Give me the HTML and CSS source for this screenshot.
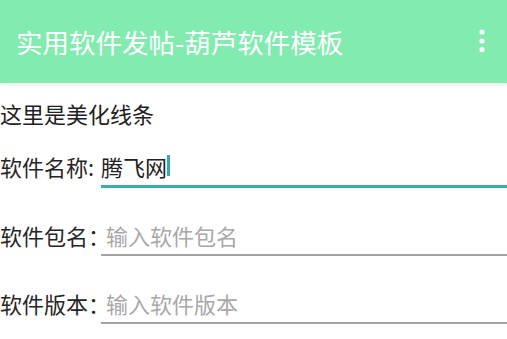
FILE: index.html
```html
<!DOCTYPE html>
<html lang="zh-CN">
<head>
<meta charset="utf-8">
<title>实用软件发帖-葫芦软件模板</title>
<link rel="stylesheet" href="styles.css">
</head>
<body>
<header class="appbar">
  <h1 class="title">实用软件发帖-葫芦软件模板</h1>
  <svg class="more" width="6" height="24" viewBox="0 0 6 24" aria-hidden="true">
    <circle cx="3" cy="3" r="2.6" fill="#fff"/>
    <circle cx="3" cy="12" r="2.6" fill="#fff"/>
    <circle cx="3" cy="20.7" r="2.6" fill="#fff"/>
  </svg>
</header>
<main class="content">
  <p class="note">这里是美化线条</p>
  <div class="row row-first">
    <span class="label">软件名称:</span>
    <div class="field focused"><span class="value">腾飞网</span><span class="caret"></span></div>
  </div>
  <div class="row">
    <span class="label">软件包名：</span>
    <div class="field"><span class="hint">输入软件包名</span></div>
  </div>
  <div class="row">
    <span class="label">软件版本：</span>
    <div class="field"><span class="hint">输入软件版本</span></div>
  </div>
</main>
</body>
</html>
```
FILE: styles.css
```css
html, body {
  margin: 0;
  padding: 0;
  background: #ffffff;
  font-family: "Noto Sans CJK SC", "Noto Sans", sans-serif;
  color: #212121;
}

.appbar {
  height: 83px;
  background: #82ebb0;
  display: flex;
  align-items: center;
  justify-content: space-between;
  padding: 0 22px 0 16px;
  box-shadow: 0 1px 3px rgba(0, 0, 0, 0.12);
  position: relative;
}

.title {
  margin: 0;
  font-size: 26.5px;
  font-weight: normal;
  color: #ffffff;
  line-height: 30px;
  white-space: nowrap;
}

.more {
  display: block;
  margin-top: -1px;
}

.content {
  padding-top: 15px;
}

.note {
  margin: 0;
  font-size: 22px;
  line-height: 30px;
}

.row {
  display: flex;
  align-items: flex-start;
  margin-top: 32px;
}

.row-first {
  margin-top: 23px;
}

.label {
  flex: none;
  width: 101px;
  font-size: 22px;
  line-height: 30px;
  color: #262626;
  white-space: nowrap;
}

.field {
  flex: 1;
  display: flex;
  align-items: center;
  height: 30px;
  padding-bottom: 4px;
  border-bottom: 2px solid #a2a2a2;
  font-size: 22px;
  line-height: 30px;
}

.field.focused {
  border-bottom: 3px solid #3aaeaa;
}

.value {
  color: #212121;
}

.caret {
  display: inline-block;
  width: 3px;
  height: 21px;
  margin-top: -1px;
  background: #35aaa6;
}

.hint {
  padding-left: 5px;
  color: #a8a8a8;
}
```
